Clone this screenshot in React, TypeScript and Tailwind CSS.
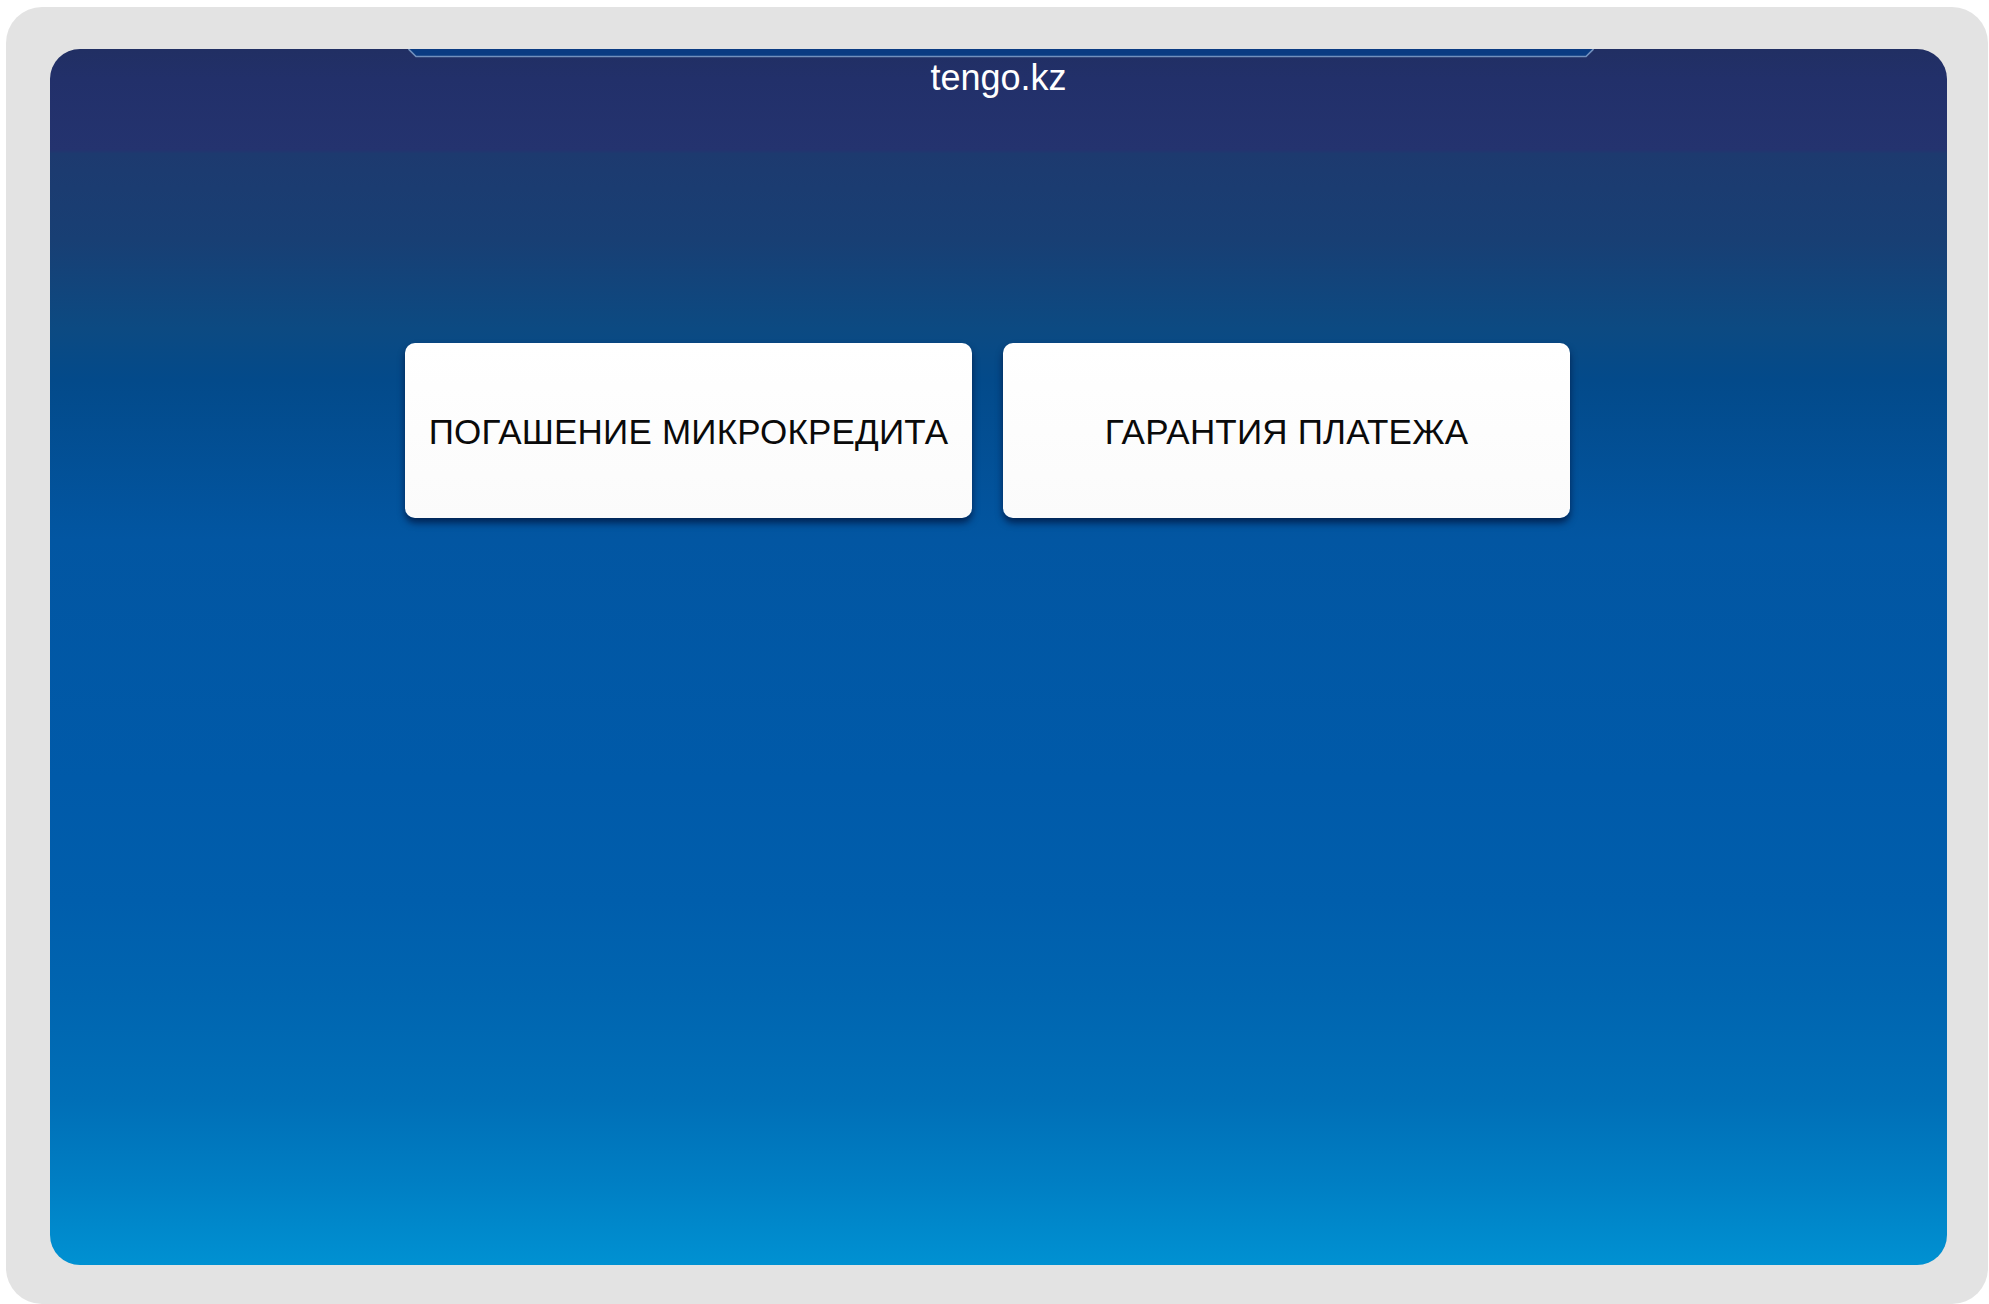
import React from "react";

const FONT = { fontFamily: '"Liberation Sans", Arial, "Noto Sans", sans-serif' };

function Tile({ label }: { label: string }) {
  return (
    <button
      type="button"
      className="w-[567px] h-[175px] rounded-[10px] bg-[linear-gradient(to_bottom,#ffffff_0%,#fbfbfb_100%)] shadow-[0_5px_7px_rgba(2,20,60,0.75)] flex items-center justify-center pt-[2px] text-[35px] leading-none text-[#0a0a0a] tracking-[0.2px]"
    >
      {label}
    </button>
  );
}

export default function App() {
  return (
    <div
      className="w-[1989px] h-[1304px] bg-white overflow-hidden pl-[6px] pt-[7px]"
      style={FONT}
    >
      <div className="w-[1982px] h-[1297px] rounded-[36px] bg-[#e3e3e3] pl-[44px] pt-[42px] pr-[41px] pb-[39px] flex">
        <div className="relative flex-1 rounded-[30px] overflow-hidden flex flex-col items-center bg-[linear-gradient(to_bottom,#212f63_0%,#22306a_2.5%,#24336f_8.3%,#1d3a6f_8.6%,#183f74_15.7%,#0c4a82_23%,#034a8a_27.2%,#0256a2_40.4%,#005aa9_60%,#005eac_70%,#0065b0_78%,#006fb7_86.4%,#007ec3_93%,#0091d2_100%)]">
          <svg
            className="absolute left-[358px] top-0"
            width="1186"
            height="9"
            viewBox="0 0 1186 9"
          >
            <polygon points="0,0 1186,0 1178,8 8,8" fill="#0a3b82" />
            <path d="M0.5,0 L8,7.5 L1178,7.5 L1185.5,0" fill="none" stroke="#7290bd" strokeWidth="1.6" />
          </svg>
          <div className="pt-[9px] text-[36px] leading-[40px] text-white">tengo.kz</div>
          <div className="mt-[245px] flex gap-[31px] pr-[22px]">
            <Tile label="ПОГАШЕНИЕ МИКРОКРЕДИТА" />
            <Tile label="ГАРАНТИЯ ПЛАТЕЖА" />
          </div>
        </div>
      </div>
    </div>
  );
}
